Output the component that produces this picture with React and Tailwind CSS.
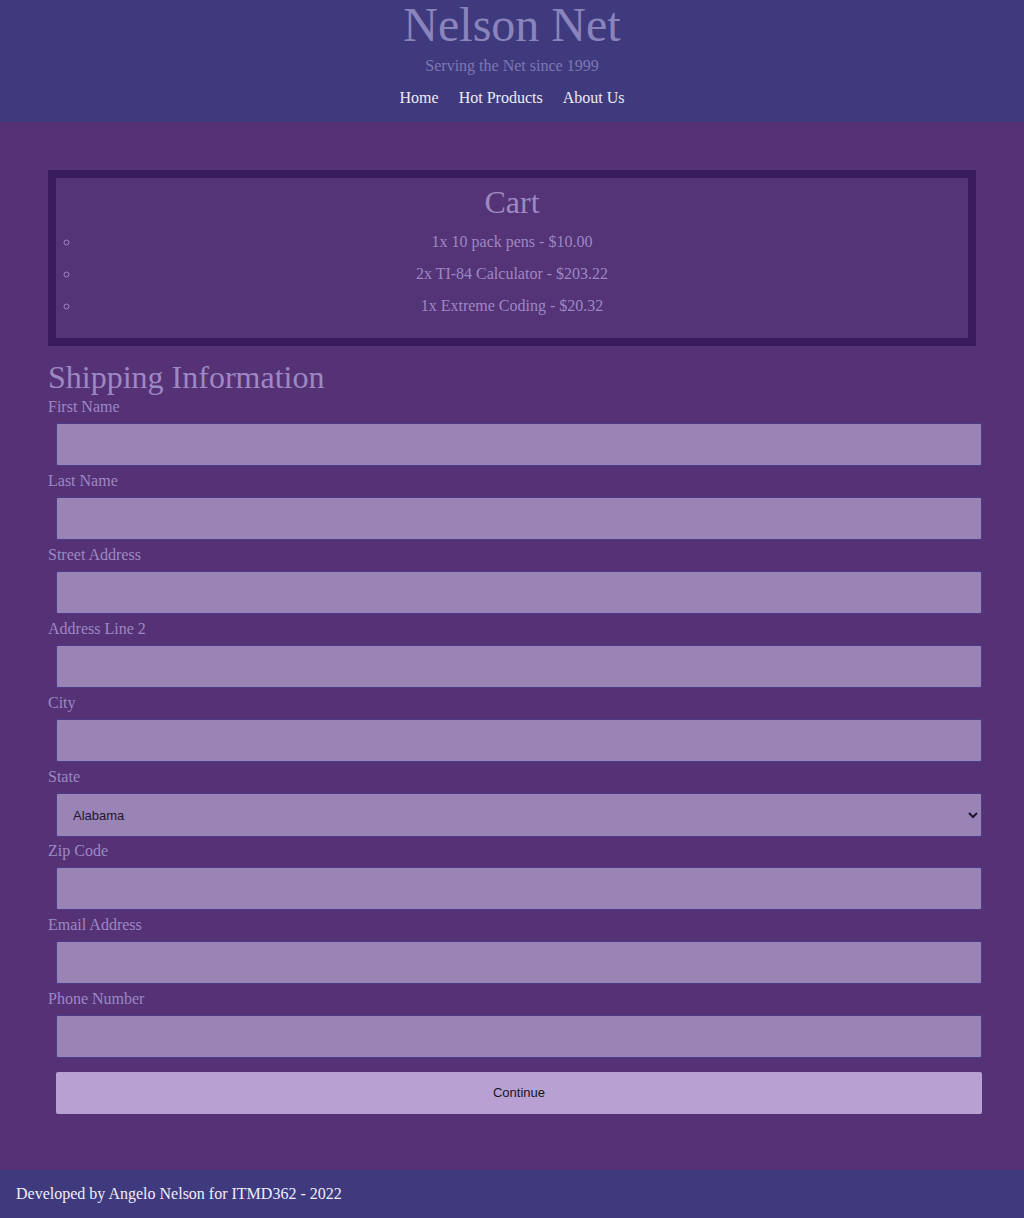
const cart = [
  "1x 10 pack pens - $10.00",
  "2x TI-84 Calculator - $203.22",
  "1x Extreme Coding - $20.32",
];

const fields = [
  "First Name",
  "Last Name",
  "Street Address",
  "Address Line 2",
  "City",
  "State",
  "Zip Code",
  "Email Address",
  "Phone Number",
];

const Field = ({ label }) => (
  <div className="h-[74px]">
    <label className="block h-[18px] leading-[18px] text-[#9d88c4]">{label}</label>
    {label === "State" ? (
      <select className="mt-[7px] ml-2 block h-[44px] w-[926px] rounded-[2px] border border-[#4b3c8a] bg-[#9a84b6] pl-3 text-[13px] text-[#1f1730] [font-family:'Liberation_Sans',Arial,sans-serif]">
        <option>Alabama</option>
      </select>
    ) : (
      <input
        type="text"
        className="mt-[7px] ml-2 block h-[43px] w-[926px] rounded-[2px] border border-[#4b3c8a] bg-[#9a84b6]"
      />
    )}
  </div>
);

export default function App() {
  return (
    <div className="min-h-[1218px] bg-[#553276] [font-family:'Liberation_Serif','Times_New_Roman',serif]">
      {/* Header */}
      <header className="h-[122px] bg-[#3f3a7e] text-center">
        <h1 className="text-[48px] leading-[49px] text-[#8a84bd]">Nelson Net</h1>
        <p className="mt-[8px] leading-[18px] text-[#7d77b4]">Serving the Net since 1999</p>
        <nav className="mt-[14px] flex justify-center gap-5 leading-[18px] text-[#ecebf4]">
          <a href="#">Home</a>
          <a href="#">Hot Products</a>
          <a href="#">About Us</a>
        </nav>
      </header>

      {/* Main */}
      <main className="px-12 pt-12 pb-[56px]">
        <section className="border-8 border-[#3a1c5e] bg-[#543376] pt-[6px] pb-[16px] text-center text-[#9d88c4]">
          <h2 className="text-[32px] leading-[37px]">Cart</h2>
          <ul className="mt-[5px] list-[circle] px-6">
            {cart.map((item) => (
              <li key={item} className="leading-[32px]">
                {item}
              </li>
            ))}
          </ul>
        </section>

        <h2 className="mt-[13px] text-[32px] leading-[37px] text-[#9d88c4]">Shipping Information</h2>
        <form className="mt-[2px]">
          {fields.map((f) => (
            <Field key={f} label={f} />
          ))}
          <button
            type="button"
            className="mt-[8px] ml-2 block h-[42px] w-[926px] rounded-[2px] bg-[#b8a0d2] text-[13px] text-[#1a1226] [font-family:'Liberation_Sans',Arial,sans-serif]"
          >
            Continue
          </button>
        </form>
      </main>

      {/* Footer */}
      <footer className="h-[48px] bg-[#3f3a7e] px-4 leading-[48px] text-[#f0eef6]">
        Developed by Angelo Nelson for ITMD362 - 2022
      </footer>
    </div>
  );
}
